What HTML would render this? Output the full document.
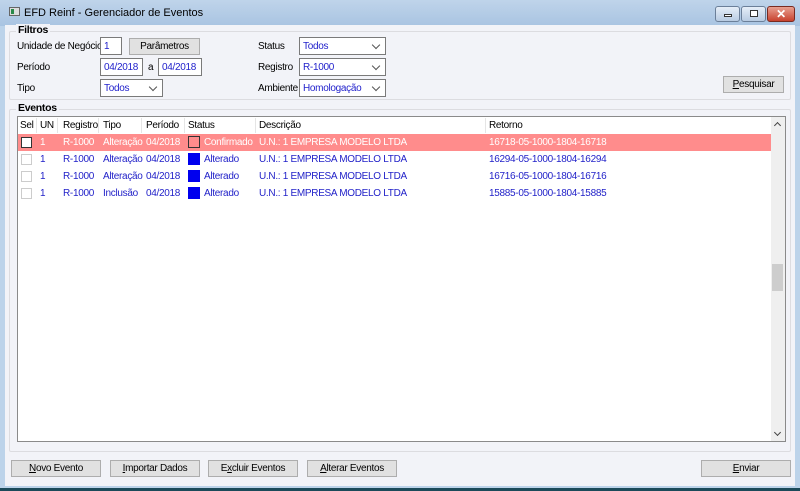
<!DOCTYPE html>
<html><head><meta charset="utf-8"><style>
*{box-sizing:border-box;margin:0;padding:0}
body{width:800px;height:491px;overflow:hidden;background:#bcd3ea;font-family:"Liberation Sans",sans-serif;font-size:10px;letter-spacing:-0.3px;color:#000;position:relative}
.a{position:absolute}
.title{left:0;top:0;width:800px;height:26px;background:linear-gradient(#bfd4ea,#a9c4e2)}
.client{left:5px;top:25px;width:790px;height:461px;background:#f2f3f8}
.grp{border:1px solid #dcdce0;border-radius:2px}
.lbl{white-space:nowrap}
.in{background:#fff;border:1px solid #7a7a7a;color:#2222cc;padding:1px 3px 0;line-height:15px;height:18px;white-space:nowrap}
.btn{background:#e1e1e1;border:1px solid #adadad;text-align:center;line-height:15px;height:17px}
.cb:after{content:"";position:absolute;right:6px;top:4px;width:5px;height:5px;border-right:1px solid #555;border-bottom:1px solid #555;transform:rotate(45deg)}
.row{left:18px;width:753px;height:17px;color:#1f1fc8}
.row span{position:absolute;top:3px;white-space:nowrap}
.chk{position:absolute;left:3px;top:3px;width:11px;height:11px;border:1px solid #ccc;background:#fff}
.sq{position:absolute;left:170px;top:2px;width:12px;height:12px;background:#0000ee}
</style></head><body>
<div class="a title"></div>
<div class="a" style="left:9px;top:7px;width:11px;height:9px;background:#ddd;border:1px solid #666"></div>
<div class="a" style="left:11px;top:9px;width:3px;height:5px;background:#2a8a4a"></div>
<div class="a lbl" style="left:24px;top:7px;font-size:11px;letter-spacing:0">EFD Reinf - Gerenciador de Eventos</div>
<div class="a" style="left:715px;top:6px;width:25px;height:16px;border:1px solid #6b7f99;border-radius:3px;background:linear-gradient(#e6eef8,#b8cbe2)"><div class="a" style="left:8px;top:7px;width:8px;height:3px;background:#fff;border:1px solid #333"></div></div>
<div class="a" style="left:741px;top:6px;width:25px;height:16px;border:1px solid #6b7f99;border-radius:3px;background:linear-gradient(#e6eef8,#b8cbe2)"><div class="a" style="left:8px;top:3px;width:8px;height:7px;border:1px solid #333;background:#fff"></div></div>
<div class="a" style="left:767px;top:6px;width:28px;height:16px;border:1px solid #7a2a20;border-radius:3px;background:linear-gradient(#e8a090,#c8422e);color:#fff;font-weight:bold;text-align:center;line-height:14px;font-size:12px">✕</div>
<div class="a client"></div>
<div class="a" style="left:0;top:488px;width:800px;height:3px;background:#1b4a5a"></div>

<div class="a grp" style="left:9px;top:31px;width:782px;height:69px"></div>
<div class="a lbl" style="left:16px;top:24px;font-weight:bold;background:#f2f3f8;padding:0 2px;font-size:10.5px">Filtros</div>
<div class="a lbl" style="left:17px;top:41px">Unidade de Negócio</div>
<div class="a in" style="left:100px;top:37px;width:22px">1</div>
<div class="a btn" style="left:129px;top:38px;width:71px">Parâmetros</div>
<div class="a lbl" style="left:17px;top:62px">Período</div>
<div class="a in" style="left:100px;top:58px;width:43px">04/2018</div>
<div class="a lbl" style="left:148px;top:62px">a</div>
<div class="a in" style="left:158px;top:58px;width:44px">04/2018</div>
<div class="a lbl" style="left:17px;top:83px">Tipo</div>
<div class="a in cb" style="left:100px;top:79px;width:63px">Todos</div>
<div class="a lbl" style="left:258px;top:41px">Status</div>
<div class="a in cb" style="left:299px;top:37px;width:87px">Todos</div>
<div class="a lbl" style="left:258px;top:62px">Registro</div>
<div class="a in cb" style="left:299px;top:58px;width:87px">R-1000</div>
<div class="a lbl" style="left:258px;top:83px">Ambiente</div>
<div class="a in cb" style="left:299px;top:79px;width:87px">Homologação</div>
<div class="a btn" style="left:723px;top:76px;width:61px"><u>P</u>esquisar</div>

<div class="a grp" style="left:9px;top:109px;width:782px;height:343px"></div>
<div class="a lbl" style="left:16px;top:102px;font-weight:bold;background:#f2f3f8;padding:0 2px;font-size:10.5px">Eventos</div>
<div class="a" style="left:17px;top:116px;width:769px;height:326px;background:#fff;border:1px solid #8a8a8a"></div>
<div class="a" style="left:771px;top:117px;width:14px;height:324px;background:#efefef"></div>
<div class="a" style="left:772px;top:264px;width:11px;height:27px;background:#cdcdcd"></div>
<div class="a" style="left:775px;top:123px;width:5px;height:5px;border-left:1px solid #444;border-top:1px solid #444;transform:rotate(45deg)"></div>
<div class="a" style="left:775px;top:430px;width:5px;height:5px;border-right:1px solid #444;border-bottom:1px solid #444;transform:rotate(45deg)"></div>
<div class="a" style="left:18px;top:117px;width:753px;height:17px">
<span class="a" style="left:2px;top:3px">Sel</span><span class="a" style="left:22px;top:3px">UN</span><span class="a" style="left:45px;top:3px">Registro</span><span class="a" style="left:85px;top:3px">Tipo</span><span class="a" style="left:128px;top:3px">Período</span><span class="a" style="left:170px;top:3px">Status</span><span class="a" style="left:241px;top:3px">Descrição</span><span class="a" style="left:471px;top:3px">Retorno</span>
<div class="a" style="left:18px;top:1px;width:1px;height:15px;background:#e5e5e5"></div><div class="a" style="left:39px;top:1px;width:1px;height:15px;background:#e5e5e5"></div><div class="a" style="left:80px;top:1px;width:1px;height:15px;background:#e5e5e5"></div><div class="a" style="left:123px;top:1px;width:1px;height:15px;background:#e5e5e5"></div><div class="a" style="left:166px;top:1px;width:1px;height:15px;background:#e5e5e5"></div><div class="a" style="left:237px;top:1px;width:1px;height:15px;background:#e5e5e5"></div><div class="a" style="left:467px;top:1px;width:1px;height:15px;background:#e5e5e5"></div>
</div>
<div class="a row" style="top:134px;background:#ff8c8c;color:#fff"><div class="chk" style="border-color:#333"></div><span style="left:22px">1</span><span style="left:45px">R-1000</span><span style="left:85px">Alteração</span><span style="left:128px">04/2018</span><div class="sq" style="background:#ff8c8c;border:1px solid #333"></div><span style="left:186px">Confirmado</span><span style="left:241px">U.N.: 1 EMPRESA MODELO LTDA</span><span style="left:471px">16718-05-1000-1804-16718</span></div>
<div class="a row" style="top:151px"><div class="chk"></div><span style="left:22px">1</span><span style="left:45px">R-1000</span><span style="left:85px">Alteração</span><span style="left:128px">04/2018</span><div class="sq"></div><span style="left:186px">Alterado</span><span style="left:241px">U.N.: 1 EMPRESA MODELO LTDA</span><span style="left:471px">16294-05-1000-1804-16294</span></div>
<div class="a row" style="top:168px"><div class="chk"></div><span style="left:22px">1</span><span style="left:45px">R-1000</span><span style="left:85px">Alteração</span><span style="left:128px">04/2018</span><div class="sq"></div><span style="left:186px">Alterado</span><span style="left:241px">U.N.: 1 EMPRESA MODELO LTDA</span><span style="left:471px">16716-05-1000-1804-16716</span></div>
<div class="a row" style="top:185px"><div class="chk"></div><span style="left:22px">1</span><span style="left:45px">R-1000</span><span style="left:85px">Inclusão</span><span style="left:128px">04/2018</span><div class="sq"></div><span style="left:186px">Alterado</span><span style="left:241px">U.N.: 1 EMPRESA MODELO LTDA</span><span style="left:471px">15885-05-1000-1804-15885</span></div>

<div class="a btn" style="left:11px;top:460px;width:90px"><u>N</u>ovo Evento</div>
<div class="a btn" style="left:110px;top:460px;width:90px"><u>I</u>mportar Dados</div>
<div class="a btn" style="left:208px;top:460px;width:90px">E<u>x</u>cluir Eventos</div>
<div class="a btn" style="left:307px;top:460px;width:90px"><u>A</u>lterar Eventos</div>
<div class="a btn" style="left:701px;top:460px;width:90px"><u>E</u>nviar</div>
</body></html>
